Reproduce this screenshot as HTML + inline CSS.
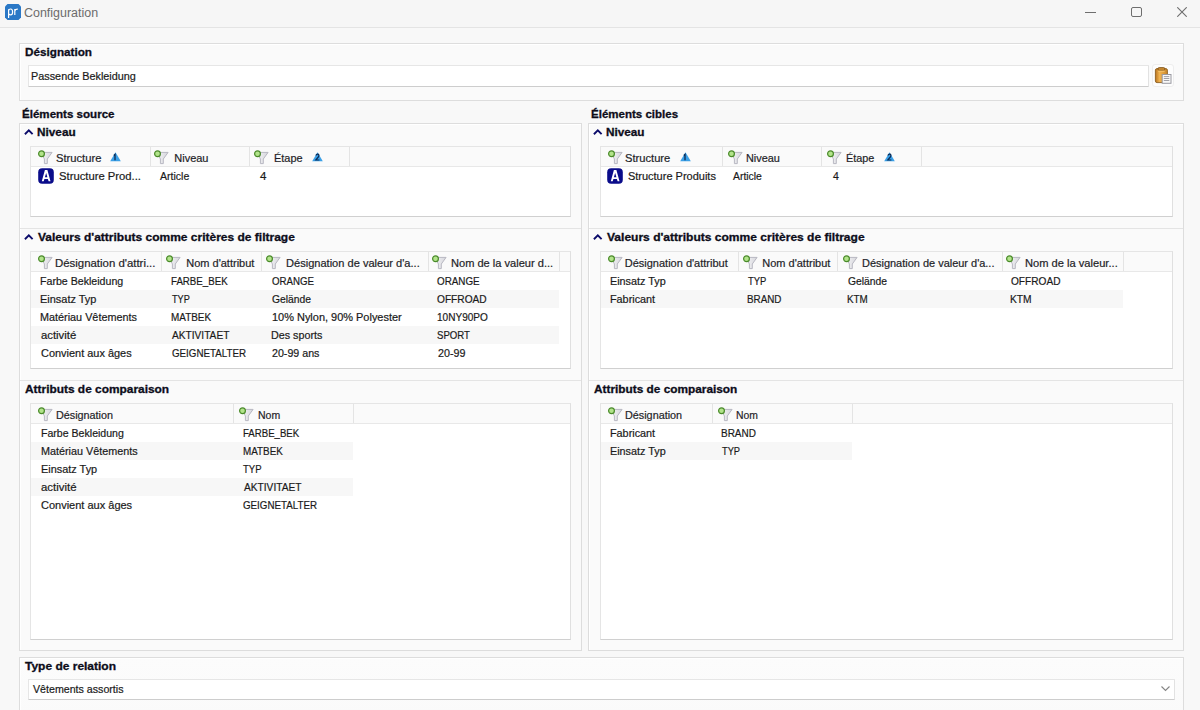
<!DOCTYPE html>
<html><head><meta charset="utf-8"><title>Configuration</title>
<style>
html,body{margin:0;padding:0;}
body{width:1200px;height:710px;overflow:hidden;position:relative;background:#f8f8f8;font-family:"Liberation Sans", sans-serif;}
.t{position:absolute;white-space:nowrap;transform-origin:0 0;}
</style></head><body>

<svg width="0" height="0" style="position:absolute">
<defs>
<symbol id="filt" viewBox="0 0 17 17">
  <linearGradient id="fg" x1="0" x2="1"><stop offset="0" stop-color="#f4f4f6"/><stop offset="1" stop-color="#d6d6dc"/></linearGradient>
  <path d="M4 3.4 H15.1 L10.3 10 V14.6 H7.4 V10 Z" fill="url(#fg)" stroke="#b8b8c2" stroke-width="1"/>
  <circle cx="4.5" cy="4.8" r="2.9" fill="#b2e48a" stroke="#4a8a2a" stroke-width="1.2"/>
</symbol>
<symbol id="sort1" viewBox="0 0 11 10">
  <path d="M5.5 0.3 L10.8 9.2 H0.2 Z" fill="#3a9fe6"/>
  <path d="M3.8 3.4 L5 2.4 V8.2" fill="none" stroke="#0b2a55" stroke-width="1.3"/>
</symbol>
<symbol id="sort2" viewBox="0 0 11 10">
  <path d="M5.5 0.3 L10.8 9.2 H0.2 Z" fill="#3a9fe6"/>
  <path d="M3.8 3.6 Q4.5 2 6 2.2 Q7.4 2.6 6.6 4.6 L3.8 8 H7.4" fill="none" stroke="#0b2a55" stroke-width="1.2"/>
</symbol>
<symbol id="aico" viewBox="0 0 16 16">
  <rect x="0.2" y="0.2" width="15.6" height="15.6" rx="4" fill="#0a0c8a"/>
  <path d="M6.9 2.1 H9.4 L12.5 13.3 H10.6 L9.9 10.9 H6.4 L5.7 13.3 H3.8 Z M6.9 9.2 H9.4 L8.15 4.9 Z" fill="#fff" fill-rule="evenodd"/>
</symbol>
<symbol id="chev" viewBox="0 0 10 6">
  <path d="M0.9 5.2 L4.8 1.4 L8.6 5.2" fill="none" stroke="#0c0c6a" stroke-width="1.9"/>
</symbol>
</defs>
</svg>

<div style="position:absolute;left:0px;top:0px;width:1200px;height:27px;background:#f6f6f6;"></div><div style="position:absolute;left:0px;top:27px;width:1200px;height:1px;background:#e4e4e4;"></div><svg style="position:absolute;left:5px;top:4px" width="16" height="16" viewBox="0 0 16 16">
<path d="M2.5 0 H13.5 L16 2.5 V13.5 L13.5 16 H2.5 L0 13.5 V2.5 Z" fill="#2a78c6"/>
<path d="M3.6 14 V5.2 M3.6 6.5 Q4 5 5.6 5 Q7.6 5 7.6 7.9 Q7.6 10.8 5.6 10.8 Q4 10.8 3.6 9.5" fill="none" stroke="#fff" stroke-width="1.2"/>
<path d="M9.8 10.9 V5.1 M9.8 7 Q10.4 5 12.8 5.1" fill="none" stroke="#fff" stroke-width="1.2"/>
</svg><div class="t" style="left:23.98px;top:6.54px;font-size:12px;line-height:13px;font-weight:400;color:#6c6c6c;transform:scaleX(1.0386);">Configuration</div><div style="position:absolute;left:1085px;top:12px;width:11px;height:1px;background:#6e6e6e;"></div><div style="position:absolute;left:1131px;top:7px;width:11px;height:10px;border:1px solid #6e6e6e;border-radius:2px;box-sizing:border-box;"></div><svg style="position:absolute;left:1177px;top:7px" width="10" height="10" viewBox="0 0 10 10">
<path d="M0.3 0.3 L9.7 9.7 M9.7 0.3 L0.3 9.7" stroke="#6e6e6e" stroke-width="1.1"/></svg><div style="position:absolute;left:19px;top:43px;width:1165px;height:58px;border:1px solid #dddddd;box-sizing:border-box;box-shadow:inset 1px 1px 0 #fff;background:#fafafa;"></div><div class="t" style="left:24.97px;top:46.29px;font-size:11px;line-height:12px;font-weight:700;color:#0d0d1a;transform:scaleX(1.0645);-webkit-text-stroke:0.3px currentColor;">Désignation</div><div style="position:absolute;left:28px;top:65px;width:1121px;height:22px;background:#fff;border:1px solid #e6e6e6;border-bottom-color:#cdcdcd;border-right-color:#e2e2e2;box-sizing:border-box;border-radius:1px;"></div><div class="t" style="left:30.76px;top:69.79px;font-size:11px;line-height:12px;font-weight:400;color:#1a1a1a;transform:scaleX(0.9857);-webkit-text-stroke:0.2px currentColor;">Passende Bekleidung</div><div style="position:absolute;left:1152px;top:64px;width:22px;height:23px;background:#fdfdfd;border:1px solid #eeeeee;border-radius:3px;box-sizing:border-box;"></div><svg style="position:absolute;left:1152px;top:63px" width="22" height="24" viewBox="0 0 22 24">
<defs><linearGradient id="cg" x1="0" x2="1"><stop offset="0" stop-color="#b87420"/><stop offset="0.35" stop-color="#f2b450"/><stop offset="1" stop-color="#c8862a"/></linearGradient></defs>
<rect x="3.4" y="5.6" width="12" height="14" rx="1.6" fill="url(#cg)" stroke="#8d5d1e" stroke-width="0.9"/>
<rect x="5.9" y="4.6" width="7" height="2.8" rx="1.3" fill="#c88a30" stroke="#7a4e18" stroke-width="0.8"/>
<rect x="6.2" y="7.6" width="6.4" height="1.2" fill="#f6c46a"/>
<rect x="10.2" y="11.5" width="8.8" height="8.8" fill="#f8f8f8" stroke="#9a9aa2" stroke-width="1"/>
<path d="M11.8 13.6 H17.3 M11.8 15.5 H17.3 M11.8 17.5 H17.3" stroke="#8a8a92" stroke-width="0.8"/>
</svg><div class="t" style="left:22.07px;top:107.79px;font-size:11px;line-height:12px;font-weight:700;color:#0d0d1a;transform:scaleX(1.0510);-webkit-text-stroke:0.3px currentColor;">Éléments source</div><div class="t" style="left:590.68px;top:107.79px;font-size:11px;line-height:12px;font-weight:700;color:#0d0d1a;transform:scaleX(1.0473);-webkit-text-stroke:0.3px currentColor;">Éléments cibles</div><div style="position:absolute;left:19px;top:123px;width:563px;height:528px;border:1px solid #dddddd;box-sizing:border-box;box-shadow:inset 1px 1px 0 #fff;background:#fafafa;"></div><svg style="position:absolute;left:23.5px;top:129px" width="10" height="6" viewBox="0 0 10 6"><use href="#chev"/></svg><div class="t" style="left:37.46px;top:126.39px;font-size:11px;line-height:12px;font-weight:700;color:#0d0d1a;transform:scaleX(1.0714);-webkit-text-stroke:0.3px currentColor;">Niveau</div><div style="position:absolute;left:30px;top:146px;width:541px;height:71px;border:1px solid #e5e5e5;border-bottom-color:#d0d0d0;border-right-color:#e0e0e0;box-sizing:border-box;background:#fff;"></div><div style="position:absolute;left:31px;top:147px;width:539px;height:19px;background:#fafafa;"></div><div style="position:absolute;left:31px;top:166px;width:539px;height:1px;background:#e8e8e8;"></div><div style="position:absolute;left:150px;top:147px;width:1px;height:19px;background:#e4e4e4;"></div><div style="position:absolute;left:249px;top:147px;width:1px;height:19px;background:#e4e4e4;"></div><div style="position:absolute;left:349px;top:147px;width:1px;height:19px;background:#e4e4e4;"></div><svg style="position:absolute;left:37px;top:149px" width="17" height="17" viewBox="0 0 17 17"><use href="#filt"/></svg><div class="t" style="left:55.99px;top:152.19px;font-size:11px;line-height:12px;font-weight:400;color:#1e1e28;transform:scaleX(1.0171);-webkit-text-stroke:0.2px currentColor;">Structure</div><svg style="position:absolute;left:110px;top:151.5px" width="11" height="10" viewBox="0 0 11 10"><use href="#sort1"/></svg><svg style="position:absolute;left:153px;top:149px" width="17" height="17" viewBox="0 0 17 17"><use href="#filt"/></svg><div class="t" style="left:174.25px;top:152.19px;font-size:11px;line-height:12px;font-weight:400;color:#1e1e28;-webkit-text-stroke:0.2px currentColor;">Niveau</div><svg style="position:absolute;left:253px;top:149px" width="17" height="17" viewBox="0 0 17 17"><use href="#filt"/></svg><div class="t" style="left:273.65px;top:152.19px;font-size:11px;line-height:12px;font-weight:400;color:#1e1e28;transform:scaleX(0.9946);-webkit-text-stroke:0.2px currentColor;">Étape</div><svg style="position:absolute;left:312px;top:151.5px" width="11" height="10" viewBox="0 0 11 10"><use href="#sort2"/></svg><svg style="position:absolute;left:37.5px;top:167.5px" width="16" height="16" viewBox="0 0 16 16"><use href="#aico"/></svg><div class="t" style="left:58.89px;top:169.79px;font-size:11px;line-height:12px;font-weight:400;color:#1a1a1a;transform:scaleX(1.0235);-webkit-text-stroke:0.2px currentColor;">Structure Prod...</div><div class="t" style="left:160.00px;top:169.79px;font-size:11px;line-height:12px;font-weight:400;color:#1a1a1a;transform:scaleX(0.9587);-webkit-text-stroke:0.2px currentColor;">Article</div><div class="t" style="left:259.74px;top:169.79px;font-size:11px;line-height:12px;font-weight:400;color:#1a1a1a;transform:scaleX(1.0435);-webkit-text-stroke:0.2px currentColor;">4</div><div style="position:absolute;left:20px;top:228px;width:561px;height:1px;background:#e4e4e4;"></div><svg style="position:absolute;left:23.5px;top:233.5px" width="10" height="6" viewBox="0 0 10 6"><use href="#chev"/></svg><div class="t" style="left:38.00px;top:230.89px;font-size:11px;line-height:12px;font-weight:700;color:#0d0d1a;transform:scaleX(1.0903);-webkit-text-stroke:0.3px currentColor;">Valeurs d&#x27;attributs comme critères de filtrage</div><div style="position:absolute;left:30px;top:251px;width:541px;height:118px;border:1px solid #e5e5e5;border-bottom-color:#d0d0d0;border-right-color:#e0e0e0;box-sizing:border-box;background:#fff;"></div><div style="position:absolute;left:31px;top:252px;width:539px;height:19px;background:#fafafa;"></div><div style="position:absolute;left:31px;top:271px;width:539px;height:1px;background:#e8e8e8;"></div><div style="position:absolute;left:161px;top:252px;width:1px;height:19px;background:#e4e4e4;"></div><div style="position:absolute;left:261px;top:252px;width:1px;height:19px;background:#e4e4e4;"></div><div style="position:absolute;left:428px;top:252px;width:1px;height:19px;background:#e4e4e4;"></div><div style="position:absolute;left:559px;top:252px;width:1px;height:19px;background:#e4e4e4;"></div><div style="position:absolute;left:31px;top:290px;width:528px;height:18px;background:#f7f7f7;"></div><div style="position:absolute;left:31px;top:326px;width:528px;height:18px;background:#f7f7f7;"></div><svg style="position:absolute;left:37px;top:254px" width="17" height="17" viewBox="0 0 17 17"><use href="#filt"/></svg><div class="t" style="left:55.47px;top:257.19px;font-size:11px;line-height:12px;font-weight:400;color:#1e1e28;transform:scaleX(1.0367);-webkit-text-stroke:0.2px currentColor;">Désignation d&#x27;attri...</div><svg style="position:absolute;left:165px;top:254px" width="17" height="17" viewBox="0 0 17 17"><use href="#filt"/></svg><div class="t" style="left:186.25px;top:257.19px;font-size:11px;line-height:12px;font-weight:400;color:#1e1e28;-webkit-text-stroke:0.2px currentColor;">Nom d&#x27;attribut</div><svg style="position:absolute;left:265px;top:254px" width="17" height="17" viewBox="0 0 17 17"><use href="#filt"/></svg><div class="t" style="left:285.95px;top:257.19px;font-size:11px;line-height:12px;font-weight:400;color:#1e1e28;transform:scaleX(1.0057);-webkit-text-stroke:0.2px currentColor;">Désignation de valeur d&#x27;a...</div><svg style="position:absolute;left:431px;top:254px" width="17" height="17" viewBox="0 0 17 17"><use href="#filt"/></svg><div class="t" style="left:450.95px;top:257.19px;font-size:11px;line-height:12px;font-weight:400;color:#1e1e28;transform:scaleX(1.0065);-webkit-text-stroke:0.2px currentColor;">Nom de la valeur d...</div><div class="t" style="left:40.28px;top:274.79px;font-size:11px;line-height:12px;font-weight:400;color:#1a1a1a;transform:scaleX(0.9647);-webkit-text-stroke:0.2px currentColor;">Farbe Bekleidung</div><div class="t" style="left:171.34px;top:274.79px;font-size:11px;line-height:12px;font-weight:400;color:#1a1a1a;transform:scaleX(0.8819);-webkit-text-stroke:0.2px currentColor;">FARBE_BEK</div><div class="t" style="left:271.56px;top:274.79px;font-size:11px;line-height:12px;font-weight:400;color:#1a1a1a;transform:scaleX(0.8813);-webkit-text-stroke:0.2px currentColor;">ORANGE</div><div class="t" style="left:436.75px;top:274.79px;font-size:11px;line-height:12px;font-weight:400;color:#1a1a1a;transform:scaleX(0.8941);-webkit-text-stroke:0.2px currentColor;">ORANGE</div><div class="t" style="left:40.25px;top:292.79px;font-size:11px;line-height:12px;font-weight:400;color:#1a1a1a;transform:scaleX(0.9955);-webkit-text-stroke:0.2px currentColor;">Einsatz Typ</div><div class="t" style="left:171.79px;top:292.79px;font-size:11px;line-height:12px;font-weight:400;color:#1a1a1a;transform:scaleX(0.8313);-webkit-text-stroke:0.2px currentColor;">TYP</div><div class="t" style="left:271.53px;top:292.79px;font-size:11px;line-height:12px;font-weight:400;color:#1a1a1a;transform:scaleX(0.9374);-webkit-text-stroke:0.2px currentColor;">Gelände</div><div class="t" style="left:436.74px;top:292.79px;font-size:11px;line-height:12px;font-weight:400;color:#1a1a1a;transform:scaleX(0.9232);-webkit-text-stroke:0.2px currentColor;">OFFROAD</div><div class="t" style="left:40.26px;top:310.79px;font-size:11px;line-height:12px;font-weight:400;color:#1a1a1a;transform:scaleX(0.9846);-webkit-text-stroke:0.2px currentColor;">Matériau Vêtements</div><div class="t" style="left:171.32px;top:310.79px;font-size:11px;line-height:12px;font-weight:400;color:#1a1a1a;transform:scaleX(0.9023);-webkit-text-stroke:0.2px currentColor;">MATBEK</div><div class="t" style="left:272.05px;top:310.79px;font-size:11px;line-height:12px;font-weight:400;color:#1a1a1a;transform:scaleX(0.9961);-webkit-text-stroke:0.2px currentColor;">10% Nylon, 90% Polyester</div><div class="t" style="left:437.31px;top:310.79px;font-size:11px;line-height:12px;font-weight:400;color:#1a1a1a;transform:scaleX(0.9138);-webkit-text-stroke:0.2px currentColor;">10NY90PO</div><div class="t" style="left:40.74px;top:328.79px;font-size:11px;line-height:12px;font-weight:400;color:#1a1a1a;transform:scaleX(1.0296);-webkit-text-stroke:0.2px currentColor;">activité</div><div class="t" style="left:172.00px;top:328.79px;font-size:11px;line-height:12px;font-weight:400;color:#1a1a1a;transform:scaleX(0.9234);-webkit-text-stroke:0.2px currentColor;">AKTIVITAET</div><div class="t" style="left:271.27px;top:328.79px;font-size:11px;line-height:12px;font-weight:400;color:#1a1a1a;transform:scaleX(0.9767);-webkit-text-stroke:0.2px currentColor;">Des sports</div><div class="t" style="left:436.76px;top:328.79px;font-size:11px;line-height:12px;font-weight:400;color:#1a1a1a;transform:scaleX(0.8730);-webkit-text-stroke:0.2px currentColor;">SPORT</div><div class="t" style="left:40.50px;top:346.79px;font-size:11px;line-height:12px;font-weight:400;color:#1a1a1a;transform:scaleX(0.9945);-webkit-text-stroke:0.2px currentColor;">Convient aux âges</div><div class="t" style="left:171.56px;top:346.79px;font-size:11px;line-height:12px;font-weight:400;color:#1a1a1a;transform:scaleX(0.8875);-webkit-text-stroke:0.2px currentColor;">GEIGNETALTER</div><div class="t" style="left:271.92px;top:346.79px;font-size:11px;line-height:12px;font-weight:400;color:#1a1a1a;transform:scaleX(0.9699);-webkit-text-stroke:0.2px currentColor;">20-99 ans</div><div class="t" style="left:437.51px;top:346.79px;font-size:11px;line-height:12px;font-weight:400;color:#1a1a1a;transform:scaleX(0.9761);-webkit-text-stroke:0.2px currentColor;">20-99</div><div style="position:absolute;left:20px;top:380px;width:561px;height:1px;background:#e4e4e4;"></div><div class="t" style="left:24.73px;top:382.89px;font-size:11px;line-height:12px;font-weight:700;color:#0d0d1a;transform:scaleX(1.0815);-webkit-text-stroke:0.3px currentColor;">Attributs de comparaison</div><div style="position:absolute;left:30px;top:403px;width:541px;height:237px;border:1px solid #e5e5e5;border-bottom-color:#d0d0d0;border-right-color:#e0e0e0;box-sizing:border-box;background:#fff;"></div><div style="position:absolute;left:31px;top:404px;width:539px;height:19px;background:#fafafa;"></div><div style="position:absolute;left:31px;top:423px;width:539px;height:1px;background:#e8e8e8;"></div><div style="position:absolute;left:233px;top:404px;width:1px;height:19px;background:#e4e4e4;"></div><div style="position:absolute;left:353px;top:404px;width:1px;height:19px;background:#e4e4e4;"></div><div style="position:absolute;left:31px;top:442px;width:322px;height:18px;background:#f7f7f7;"></div><div style="position:absolute;left:31px;top:478px;width:322px;height:18px;background:#f7f7f7;"></div><svg style="position:absolute;left:37px;top:406px" width="17" height="17" viewBox="0 0 17 17"><use href="#filt"/></svg><div class="t" style="left:56.06px;top:409.19px;font-size:11px;line-height:12px;font-weight:400;color:#1e1e28;transform:scaleX(0.9815);-webkit-text-stroke:0.2px currentColor;">Désignation</div><svg style="position:absolute;left:238px;top:406px" width="17" height="17" viewBox="0 0 17 17"><use href="#filt"/></svg><div class="t" style="left:257.78px;top:409.19px;font-size:11px;line-height:12px;font-weight:400;color:#1e1e28;transform:scaleX(0.9545);-webkit-text-stroke:0.2px currentColor;">Nom</div><div class="t" style="left:40.78px;top:426.79px;font-size:11px;line-height:12px;font-weight:400;color:#1a1a1a;transform:scaleX(0.9612);-webkit-text-stroke:0.2px currentColor;">Farbe Bekleidung</div><div class="t" style="left:243.04px;top:426.79px;font-size:11px;line-height:12px;font-weight:400;color:#1a1a1a;transform:scaleX(0.8756);-webkit-text-stroke:0.2px currentColor;">FARBE_BEK</div><div class="t" style="left:40.76px;top:444.79px;font-size:11px;line-height:12px;font-weight:400;color:#1a1a1a;transform:scaleX(0.9815);-webkit-text-stroke:0.2px currentColor;">Matériau Vêtements</div><div class="t" style="left:243.03px;top:444.79px;font-size:11px;line-height:12px;font-weight:400;color:#1a1a1a;transform:scaleX(0.8966);-webkit-text-stroke:0.2px currentColor;">MATBEK</div><div class="t" style="left:40.76px;top:462.79px;font-size:11px;line-height:12px;font-weight:400;color:#1a1a1a;transform:scaleX(0.9910);-webkit-text-stroke:0.2px currentColor;">Einsatz Typ</div><div class="t" style="left:243.48px;top:462.79px;font-size:11px;line-height:12px;font-weight:400;color:#1a1a1a;transform:scaleX(0.8675);-webkit-text-stroke:0.2px currentColor;">TYP</div><div class="t" style="left:41.24px;top:480.79px;font-size:11px;line-height:12px;font-weight:400;color:#1a1a1a;transform:scaleX(1.0370);-webkit-text-stroke:0.2px currentColor;">activité</div><div class="t" style="left:243.70px;top:480.79px;font-size:11px;line-height:12px;font-weight:400;color:#1a1a1a;transform:scaleX(0.9242);-webkit-text-stroke:0.2px currentColor;">AKTIVITAET</div><div class="t" style="left:41.00px;top:498.79px;font-size:11px;line-height:12px;font-weight:400;color:#1a1a1a;-webkit-text-stroke:0.2px currentColor;">Convient aux âges</div><div class="t" style="left:243.26px;top:498.79px;font-size:11px;line-height:12px;font-weight:400;color:#1a1a1a;transform:scaleX(0.8875);-webkit-text-stroke:0.2px currentColor;">GEIGNETALTER</div><div style="position:absolute;left:588px;top:123px;width:596px;height:528px;border:1px solid #dddddd;box-sizing:border-box;box-shadow:inset 1px 1px 0 #fff;background:#fafafa;"></div><svg style="position:absolute;left:592.5px;top:129px" width="10" height="6" viewBox="0 0 10 6"><use href="#chev"/></svg><div class="t" style="left:606.47px;top:126.39px;font-size:11px;line-height:12px;font-weight:700;color:#0d0d1a;transform:scaleX(1.0686);-webkit-text-stroke:0.3px currentColor;">Niveau</div><div style="position:absolute;left:600px;top:146px;width:573px;height:71px;border:1px solid #e5e5e5;border-bottom-color:#d0d0d0;border-right-color:#e0e0e0;box-sizing:border-box;background:#fff;"></div><div style="position:absolute;left:601px;top:147px;width:571px;height:19px;background:#fafafa;"></div><div style="position:absolute;left:601px;top:166px;width:571px;height:1px;background:#e8e8e8;"></div><div style="position:absolute;left:722px;top:147px;width:1px;height:19px;background:#e4e4e4;"></div><div style="position:absolute;left:821px;top:147px;width:1px;height:19px;background:#e4e4e4;"></div><div style="position:absolute;left:921px;top:147px;width:1px;height:19px;background:#e4e4e4;"></div><svg style="position:absolute;left:607px;top:149px" width="17" height="17" viewBox="0 0 17 17"><use href="#filt"/></svg><div class="t" style="left:625.09px;top:152.19px;font-size:11px;line-height:12px;font-weight:400;color:#1e1e28;transform:scaleX(1.0149);-webkit-text-stroke:0.2px currentColor;">Structure</div><svg style="position:absolute;left:680px;top:151.5px" width="11" height="10" viewBox="0 0 11 10"><use href="#sort1"/></svg><svg style="position:absolute;left:727px;top:149px" width="17" height="17" viewBox="0 0 17 17"><use href="#filt"/></svg><div class="t" style="left:746.26px;top:152.19px;font-size:11px;line-height:12px;font-weight:400;color:#1e1e28;transform:scaleX(0.9909);-webkit-text-stroke:0.2px currentColor;">Niveau</div><svg style="position:absolute;left:826px;top:149px" width="17" height="17" viewBox="0 0 17 17"><use href="#filt"/></svg><div class="t" style="left:845.86px;top:152.19px;font-size:11px;line-height:12px;font-weight:400;color:#1e1e28;transform:scaleX(0.9874);-webkit-text-stroke:0.2px currentColor;">Étape</div><svg style="position:absolute;left:884px;top:151.5px" width="11" height="10" viewBox="0 0 11 10"><use href="#sort2"/></svg><svg style="position:absolute;left:607px;top:167.5px" width="16" height="16" viewBox="0 0 16 16"><use href="#aico"/></svg><div class="t" style="left:627.90px;top:169.79px;font-size:11px;line-height:12px;font-weight:400;color:#1a1a1a;-webkit-text-stroke:0.2px currentColor;">Structure Produits</div><div class="t" style="left:733.00px;top:169.79px;font-size:11px;line-height:12px;font-weight:400;color:#1a1a1a;transform:scaleX(0.9455);-webkit-text-stroke:0.2px currentColor;">Article</div><div class="t" style="left:832.76px;top:169.79px;font-size:11px;line-height:12px;font-weight:400;color:#1a1a1a;transform:scaleX(0.9565);-webkit-text-stroke:0.2px currentColor;">4</div><div style="position:absolute;left:589px;top:228px;width:594px;height:1px;background:#e4e4e4;"></div><svg style="position:absolute;left:592.5px;top:233.5px" width="10" height="6" viewBox="0 0 10 6"><use href="#chev"/></svg><div class="t" style="left:606.90px;top:230.89px;font-size:11px;line-height:12px;font-weight:700;color:#0d0d1a;transform:scaleX(1.0937);-webkit-text-stroke:0.3px currentColor;">Valeurs d&#x27;attributs comme critères de filtrage</div><div style="position:absolute;left:600px;top:251px;width:573px;height:118px;border:1px solid #e5e5e5;border-bottom-color:#d0d0d0;border-right-color:#e0e0e0;box-sizing:border-box;background:#fff;"></div><div style="position:absolute;left:601px;top:252px;width:571px;height:19px;background:#fafafa;"></div><div style="position:absolute;left:601px;top:271px;width:571px;height:1px;background:#e8e8e8;"></div><div style="position:absolute;left:738px;top:252px;width:1px;height:19px;background:#e4e4e4;"></div><div style="position:absolute;left:837px;top:252px;width:1px;height:19px;background:#e4e4e4;"></div><div style="position:absolute;left:1002px;top:252px;width:1px;height:19px;background:#e4e4e4;"></div><div style="position:absolute;left:1123px;top:252px;width:1px;height:19px;background:#e4e4e4;"></div><div style="position:absolute;left:601px;top:290px;width:522px;height:18px;background:#f7f7f7;"></div><svg style="position:absolute;left:607px;top:254px" width="17" height="17" viewBox="0 0 17 17"><use href="#filt"/></svg><div class="t" style="left:624.75px;top:257.19px;font-size:11px;line-height:12px;font-weight:400;color:#1e1e28;-webkit-text-stroke:0.2px currentColor;">Désignation d&#x27;attribut</div><svg style="position:absolute;left:742px;top:254px" width="17" height="17" viewBox="0 0 17 17"><use href="#filt"/></svg><div class="t" style="left:762.25px;top:257.19px;font-size:11px;line-height:12px;font-weight:400;color:#1e1e28;-webkit-text-stroke:0.2px currentColor;">Nom d&#x27;attribut</div><svg style="position:absolute;left:842px;top:254px" width="17" height="17" viewBox="0 0 17 17"><use href="#filt"/></svg><div class="t" style="left:862.25px;top:257.19px;font-size:11px;line-height:12px;font-weight:400;color:#1e1e28;transform:scaleX(0.9962);-webkit-text-stroke:0.2px currentColor;">Désignation de valeur d&#x27;a...</div><svg style="position:absolute;left:1005px;top:254px" width="17" height="17" viewBox="0 0 17 17"><use href="#filt"/></svg><div class="t" style="left:1025.24px;top:257.19px;font-size:11px;line-height:12px;font-weight:400;color:#1e1e28;transform:scaleX(1.0111);-webkit-text-stroke:0.2px currentColor;">Nom de la valeur...</div><div class="t" style="left:609.76px;top:274.79px;font-size:11px;line-height:12px;font-weight:400;color:#1a1a1a;transform:scaleX(0.9820);-webkit-text-stroke:0.2px currentColor;">Einsatz Typ</div><div class="t" style="left:747.79px;top:274.79px;font-size:11px;line-height:12px;font-weight:400;color:#1a1a1a;transform:scaleX(0.8554);-webkit-text-stroke:0.2px currentColor;">TYP</div><div class="t" style="left:847.53px;top:274.79px;font-size:11px;line-height:12px;font-weight:400;color:#1a1a1a;transform:scaleX(0.9387);-webkit-text-stroke:0.2px currentColor;">Gelände</div><div class="t" style="left:1010.54px;top:274.79px;font-size:11px;line-height:12px;font-weight:400;color:#1a1a1a;transform:scaleX(0.9194);-webkit-text-stroke:0.2px currentColor;">OFFROAD</div><div class="t" style="left:609.76px;top:292.79px;font-size:11px;line-height:12px;font-weight:400;color:#1a1a1a;transform:scaleX(0.9834);-webkit-text-stroke:0.2px currentColor;">Fabricant</div><div class="t" style="left:747.33px;top:292.79px;font-size:11px;line-height:12px;font-weight:400;color:#1a1a1a;transform:scaleX(0.8926);-webkit-text-stroke:0.2px currentColor;">BRAND</div><div class="t" style="left:847.33px;top:292.79px;font-size:11px;line-height:12px;font-weight:400;color:#1a1a1a;transform:scaleX(0.8966);-webkit-text-stroke:0.2px currentColor;">KTM</div><div class="t" style="left:1010.30px;top:292.79px;font-size:11px;line-height:12px;font-weight:400;color:#1a1a1a;transform:scaleX(0.9310);-webkit-text-stroke:0.2px currentColor;">KTM</div><div style="position:absolute;left:589px;top:380px;width:594px;height:1px;background:#e4e4e4;"></div><div class="t" style="left:594.23px;top:382.89px;font-size:11px;line-height:12px;font-weight:700;color:#0d0d1a;transform:scaleX(1.0755);-webkit-text-stroke:0.3px currentColor;">Attributs de comparaison</div><div style="position:absolute;left:600px;top:403px;width:573px;height:237px;border:1px solid #e5e5e5;border-bottom-color:#d0d0d0;border-right-color:#e0e0e0;box-sizing:border-box;background:#fff;"></div><div style="position:absolute;left:601px;top:404px;width:571px;height:19px;background:#fafafa;"></div><div style="position:absolute;left:601px;top:423px;width:571px;height:1px;background:#e8e8e8;"></div><div style="position:absolute;left:712px;top:404px;width:1px;height:19px;background:#e4e4e4;"></div><div style="position:absolute;left:852px;top:404px;width:1px;height:19px;background:#e4e4e4;"></div><div style="position:absolute;left:601px;top:442px;width:251px;height:18px;background:#f7f7f7;"></div><svg style="position:absolute;left:607px;top:406px" width="17" height="17" viewBox="0 0 17 17"><use href="#filt"/></svg><div class="t" style="left:624.76px;top:409.19px;font-size:11px;line-height:12px;font-weight:400;color:#1e1e28;transform:scaleX(0.9824);-webkit-text-stroke:0.2px currentColor;">Désignation</div><svg style="position:absolute;left:717px;top:406px" width="17" height="17" viewBox="0 0 17 17"><use href="#filt"/></svg><div class="t" style="left:736.04px;top:409.19px;font-size:11px;line-height:12px;font-weight:400;color:#1e1e28;transform:scaleX(0.9432);-webkit-text-stroke:0.2px currentColor;">Nom</div><div class="t" style="left:609.76px;top:426.79px;font-size:11px;line-height:12px;font-weight:400;color:#1a1a1a;transform:scaleX(0.9834);-webkit-text-stroke:0.2px currentColor;">Fabricant</div><div class="t" style="left:721.32px;top:426.79px;font-size:11px;line-height:12px;font-weight:400;color:#1a1a1a;transform:scaleX(0.9060);-webkit-text-stroke:0.2px currentColor;">BRAND</div><div class="t" style="left:609.76px;top:444.79px;font-size:11px;line-height:12px;font-weight:400;color:#1a1a1a;transform:scaleX(0.9820);-webkit-text-stroke:0.2px currentColor;">Einsatz Typ</div><div class="t" style="left:721.79px;top:444.79px;font-size:11px;line-height:12px;font-weight:400;color:#1a1a1a;transform:scaleX(0.8434);-webkit-text-stroke:0.2px currentColor;">TYP</div><div style="position:absolute;left:19px;top:657px;width:1165px;height:60px;border:1px solid #dddddd;box-sizing:border-box;box-shadow:inset 1px 1px 0 #fff;background:linear-gradient(#fcfcfc,#fafafa);"></div><div class="t" style="left:25.20px;top:659.69px;font-size:11px;line-height:12px;font-weight:700;color:#0d0d1a;transform:scaleX(1.0892);-webkit-text-stroke:0.3px currentColor;">Type de relation</div><div style="position:absolute;left:28px;top:679px;width:1147px;height:21px;background:#fff;border:1px solid #e6e6e6;border-bottom-color:#cdcdcd;border-right-color:#e2e2e2;box-sizing:border-box;border-radius:1px;"></div><div class="t" style="left:32.60px;top:683.29px;font-size:11px;line-height:12px;font-weight:400;color:#1a1a1a;transform:scaleX(0.9673);-webkit-text-stroke:0.2px currentColor;">Vêtements assortis</div><svg style="position:absolute;left:1160px;top:685px" width="11" height="7" viewBox="0 0 11 7">
<path d="M1.5 1.5 L5.5 5.5 L9.5 1.5" fill="none" stroke="#858585" stroke-width="1.1"/></svg>
</body></html>
